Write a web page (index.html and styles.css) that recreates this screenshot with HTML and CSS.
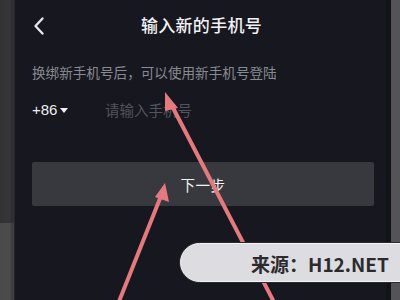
FILE: index.html
```html
<!DOCTYPE html>
<html lang="zh">
<head>
<meta charset="utf-8">
<link rel="stylesheet" href="styles.css">
</head>
<body>
<div class="frame">
  <div class="strip-left"><div class="strip-top"></div><div class="strip-bottom"></div></div>
  <div class="screen">
    <div class="header">
      <svg class="back" width="12" height="20" viewBox="0 0 12 20"><path d="M9.5 2.5 L2.5 10 L9.5 17.5" fill="none" stroke="#e6e6ea" stroke-width="2.4" stroke-linecap="round" stroke-linejoin="round"/></svg>
      <div class="title">输入新的手机号</div>
    </div>
    <div class="hint">换绑新手机号后，可以使用新手机号登陆</div>
    <div class="phone-row">
      <div class="code">+86<span class="tri"></span></div>
      <div class="placeholder">请输入手机号</div>
    </div>
    <div class="btn">下一步</div>
  </div>
  <div class="edge"></div>
  <div class="strip-right"></div>
</div>
<svg class="arrows" width="400" height="300" viewBox="0 0 400 300">
  <g fill="#e47a7e" stroke="#e47a7e">
    <line x1="275" y1="304" x2="171" y2="104" stroke-width="4"/>
    <polygon points="165,92 178,108 165,111" stroke="none"/>
    <line x1="118" y1="304" x2="161" y2="196" stroke-width="4"/>
    <polygon points="165,183 169,202 155,197" stroke="none"/>
  </g>
</svg>
<div class="watermark">来源：H12.NET</div>
</body>
</html>
```
FILE: styles.css
```css
html, body {
  margin: 0;
  padding: 0;
}
body {
  width: 400px;
  height: 300px;
  overflow: hidden;
  position: relative;
  background: #16171f;
  font-family: "Noto Sans CJK SC", "Liberation Sans", sans-serif;
}
.frame {
  display: flex;
  height: 300px;
}
.strip-left {
  width: 15px;
  display: flex;
  flex-direction: column;
  border-right: 1px solid #26262a;
  box-sizing: border-box;
}
.strip-top {
  height: 223px;
  background: linear-gradient(90deg, #323234 0, #363638 10px, #2c2c2e 12px, #333335 14px);
}
.strip-bottom {
  flex: 1;
  background: linear-gradient(90deg, #4a4a4a 0, #4c4c4c 10px, #3a3a3c 12px, #454547 14px);
}
.screen {
  flex: 1;
  background: #16171f;
  padding: 0 12px 0 17px;
  display: flex;
  flex-direction: column;
}
.edge {
  width: 5px;
  background: #121219;
}
.strip-right {
  width: 9px;
  background: #545456;
}
.header {
  height: 50px;
  display: flex;
  align-items: center;
  position: relative;
}
.back {
  margin-left: 1px;
  margin-top: 1px;
}
.title {
  position: absolute;
  left: 0;
  right: 0;
  top: 13px;
  text-align: center;
  padding-right: 3px;
  color: #f2f2f4;
  font-size: 17px;
  font-weight: 500;
  line-height: 24px;
  letter-spacing: 0.3px;
}
.hint {
  margin-top: 12px;
  color: #8a8b91;
  font-size: 13.6px;
  line-height: 20px;
}
.phone-row {
  display: flex;
  align-items: center;
  height: 24px;
  margin-top: 15px;
}
.code {
  color: #f0f0f2;
  font-family: "Liberation Sans", sans-serif;
  font-size: 15px;
  width: 73px;
  display: flex;
  align-items: center;
}
.tri {
  margin-left: 3px;
  margin-top: 2px;
  width: 0;
  height: 0;
  border-left: 4px solid transparent;
  border-right: 4px solid transparent;
  border-top: 5px solid #f0f0f2;
}
.placeholder {
  color: #52545c;
  font-size: 14.5px;
}
.btn {
  margin-top: 41px;
  height: 44px;
  background: #38383f;
  border-radius: 2px;
  color: #f2f2f4;
  font-size: 14.5px;
  display: flex;
  align-items: center;
  justify-content: center;
  letter-spacing: 0.5px;
}
.arrows {
  position: absolute;
  left: 0;
  top: 0;
}
.watermark {
  position: absolute;
  left: 180px;
  top: 243px;
  width: 240px;
  height: 39px;
  border: 1px solid #f4f4f6;
  border-radius: 21px 0 0 21px;
  background: #dddde1;
  box-shadow: 0 0 0 1px #2a2a30;
  color: #2b2b2e;
  font-family: "Noto Sans CJK SC", "Liberation Sans", sans-serif;
  font-weight: 700;
  font-size: 19px;
  line-height: 39px;
  padding-left: 70px;
  box-sizing: border-box;
}
```
